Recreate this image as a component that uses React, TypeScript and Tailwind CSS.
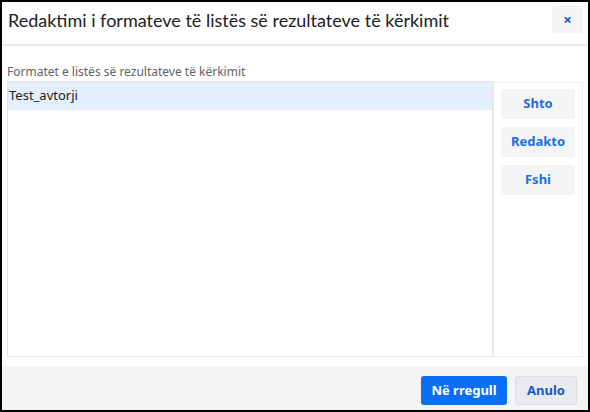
const FONT = "font-['Noto_Sans','Open_Sans',sans-serif]";

function SideButton({ label }: { label: string }) {
  return (
    <button className="h-[30px] w-[74px] rounded-[3px] bg-[#f3f4f6] text-[13px] font-bold text-[#1a6fe0]">
      {label}
    </button>
  );
}

export default function App() {
  return (
    <div
      className={`flex h-[412px] w-[590px] flex-col border-2 border-black bg-white ${FONT}`}
    >
      {/* Header */}
      <div className="flex h-[44px] items-start justify-between border-b-2 border-[#e8eaed] pl-[6px] pr-[5px] pt-[4px]">
        <h1 className="pt-[2px] font-['Lato',sans-serif] text-[18px] leading-[24px] text-[#202124]">
          Redaktimi i formateve të listës së rezultateve të kërkimit
        </h1>
        <button className="flex h-[27px] w-[31px] items-center justify-center rounded-[3px] bg-[#f3f4f6] text-[15px] font-bold leading-none text-[#1a56c8]">
          ×
        </button>
      </div>

      {/* Body */}
      <div className="flex flex-1 flex-col px-[5px] pt-[18px]">
        <div className="text-[12px] leading-[16px] text-[#5f6368]">
          Formatet e listës së rezultateve të kërkimit
        </div>
        <div className="mt-[1px] flex h-[276px]">
          <div className="flex-1 border border-[#dde3ea]">
            <div className="flex h-[28px] items-center bg-[#e3eefc] pl-[1px] text-[13px] text-[#202124]">
              Test_avtorji
            </div>
          </div>
          <div className="mt-[1px] flex w-[90px] flex-col gap-[8px] border border-[#eceef1] pl-[7px] pt-[6px]">
            <SideButton label="Shto" />
            <SideButton label="Redakto" />
            <SideButton label="Fshi" />
          </div>
        </div>
      </div>

      {/* Footer */}
      <div className="flex h-[44px] items-start justify-end gap-[8px] bg-[#f3f4f6] pr-[11px] pt-[10px]">
        <button className="h-[29px] w-[86px] rounded-[3px] bg-[#0a6ff2] text-[13px] font-bold text-white">
          Në rregull
        </button>
        <button className="h-[29px] w-[62px] rounded-[3px] border border-[#d9dce1] bg-[#e8eaed] text-[13px] font-bold text-[#1a56c8]">
          Anulo
        </button>
      </div>
    </div>
  );
}
